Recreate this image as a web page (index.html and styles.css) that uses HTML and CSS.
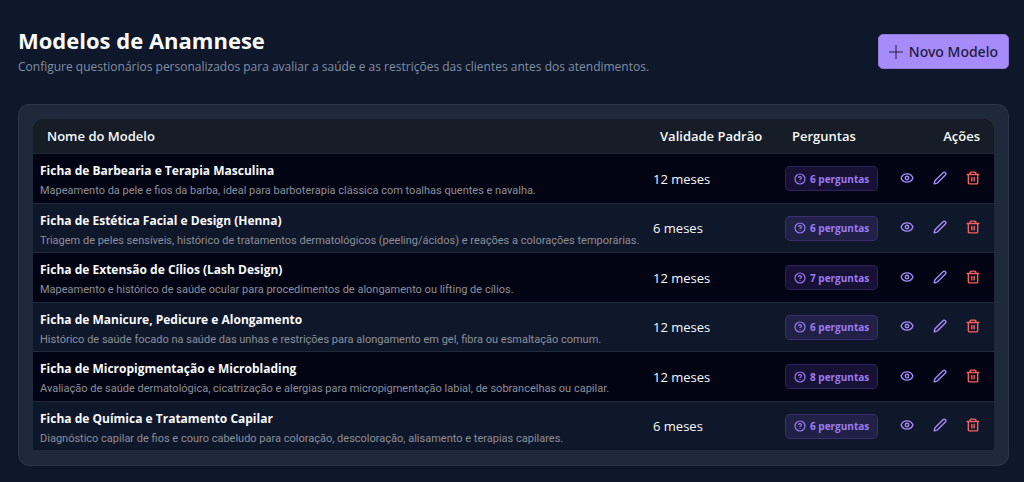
FILE: index.html
```html
<!DOCTYPE html>
<html lang="pt-br">
<head>
  <meta charset="UTF-8">
  <title>Modelos de Anamnese</title>
  <meta name="viewport" content="width=device-width, initial-scale=1">
  <link rel="stylesheet" href="styles.css">
</head>
<body>
  <!-- Ícones reutilizados nas linhas -->
  <svg class="sprite" aria-hidden="true">
    <symbol id="i-help" viewBox="0 0 24 24"><circle cx="12" cy="12" r="10"/><path d="M9.1 9a3 3 0 0 1 5.8 1c0 2-3 3-3 3M12 17h.01"/></symbol>
    <symbol id="i-eye" viewBox="0 0 24 24"><path d="M2 12.3a1 1 0 0 1 0-.7 10.8 10.8 0 0 1 20 0 1 1 0 0 1 0 .7 10.8 10.8 0 0 1-20 0"/><circle cx="12" cy="12" r="3"/></symbol>
    <symbol id="i-edit" viewBox="0 0 24 24"><path d="M21.2 6.8a1 1 0 0 0-4-4L3.8 16.2a2 2 0 0 0-.5.8L2 21.4a.5.5 0 0 0 .6.6L7 20.7a2 2 0 0 0 .8-.5z"/></symbol>
    <symbol id="i-trash" viewBox="0 0 24 24"><path d="M2 6h20M20 6v14a2 2 0 0 1-2 2H6a2 2 0 0 1-2-2V6M7 6V4a2 2 0 0 1 2-2h6a2 2 0 0 1 2 2v2M10 11v6M14 11v6"/></symbol>
  </svg>

  <header class="topo">
    <div>
      <h1>Modelos de Anamnese</h1>
      <p class="subtitulo">Configure questionários personalizados para avaliar a saúde e as restrições das clientes antes dos atendimentos.</p>
    </div>
    <button class="btn-novo" type="button">
      <svg viewBox="0 0 14 14" aria-hidden="true"><path d="M7 0v14M0 7h14"/></svg>
      Novo Modelo
    </button>
  </header>

  <main class="painel">
    <table class="tabela">
      <thead>
        <tr>
          <th>Nome do Modelo</th>
          <th class="col-validade">Validade Padrão</th>
          <th class="col-perguntas">Perguntas</th>
          <th class="col-acoes">Ações</th>
        </tr>
      </thead>
      <tbody id="modelos"></tbody>
    </table>
  </main>

  <script>
    const modelos = [
      ["Ficha de Barbearia e Terapia Masculina", "Mapeamento da pele e fios da barba, ideal para barboterapia clássica com toalhas quentes e navalha.", 12, 6],
      ["Ficha de Estética Facial e Design (Henna)", "Triagem de peles sensíveis, histórico de tratamentos dermatológicos (peeling/ácidos) e reações a colorações temporárias.", 6, 6],
      ["Ficha de Extensão de Cílios (Lash Design)", "Mapeamento e histórico de saúde ocular para procedimentos de alongamento ou lifting de cílios.", 12, 7],
      ["Ficha de Manicure, Pedicure e Alongamento", "Histórico de saúde focado na saúde das unhas e restrições para alongamento em gel, fibra ou esmaltação comum.", 12, 6],
      ["Ficha de Micropigmentação e Microblading", "Avaliação de saúde dermatológica, cicatrização e alergias para micropigmentação labial, de sobrancelhas ou capilar.", 12, 8],
      ["Ficha de Química e Tratamento Capilar", "Diagnóstico capilar de fios e couro cabeludo para coloração, descoloração, alisamento e terapias capilares.", 6, 6]
    ];

    const icone = nome => `<svg class="icone" aria-hidden="true"><use href="#i-${nome}"/></svg>`;

    document.getElementById('modelos').innerHTML = modelos.map(([nome, descricao, meses, perguntas]) => `
      <tr>
        <td><div class="nome">${nome}</div><div class="descricao">${descricao}</div></td>
        <td>${meses} meses</td>
        <td><span class="badge">${icone('help')}${perguntas} perguntas</span></td>
        <td>
          <div class="acoes">
            <button type="button" aria-label="Visualizar">${icone('eye')}</button>
            <button type="button" aria-label="Editar">${icone('edit')}</button>
            <button type="button" class="excluir" aria-label="Excluir">${icone('trash')}</button>
          </div>
        </td>
      </tr>`).join('');
  </script>
</body>
</html>
```
FILE: styles.css
```css
* {
  box-sizing: border-box;
}
body {
  margin: 0;
  padding: 25px 15px 16px 18px;
  background: #0f172a;
  color: #f8fafc;
  font-family: 'Segoe UI', 'Open Sans', 'Noto Sans', sans-serif;
  font-size: 13px;
}
button {
  font-family: inherit;
  cursor: pointer;
}
.sprite {
  display: none;
}
.topo {
  display: flex;
  justify-content: space-between;
  align-items: center;
  margin-bottom: 26px;
}
h1 {
  margin: 0;
  font-size: 22px;
  line-height: 31px;
  font-weight: 700;
}
.subtitulo {
  margin: 0;
  font-size: 12px;
  line-height: 22px;
  color: #8190a6;
}
.btn-novo {
  display: flex;
  align-items: center;
  gap: 6px;
  height: 35px;
  padding: 0 10px;
  background: #a78bfa;
  color: #1e1b3a;
  border: 1px solid #8f79d8;
  border-radius: 5px;
  font-family: 'Segoe UI', 'Noto Sans', sans-serif;
  font-size: 14px;
  font-weight: 500;
}
.btn-novo svg {
  width: 14px;
  height: 14px;
  fill: none;
  stroke: currentColor;
}
.painel {
  padding: 14px;
  background: #1e293b;
  border: 1px solid #293548;
  border-radius: 11px;
}
.tabela {
  width: 100%;
  border-spacing: 0;
  table-layout: fixed;
}
.tabela th {
  height: 35px;
  padding: 0 14px;
  background: #161d26;
  border-bottom: 1px solid #1e2937;
  font-size: 13px;
  font-weight: 600;
  text-align: left;
}
.tabela th:first-child {
  border-top-left-radius: 11px;
}
.tabela th:last-child {
  border-top-right-radius: 11px;
}
.tabela .col-validade {
  width: 132px;
}
.tabela .col-perguntas {
  width: 108px;
}
.tabela .col-acoes {
  width: 108px;
  text-align: right;
}
.tabela td {
  height: 50px;
  padding: 0 7px;
  background: #020413;
  border-bottom: 1px solid #1e293b;
  white-space: nowrap;
}
.tabela tr:nth-child(even) td {
  height: 49px;
  background: #0f172a;
}
.nome {
  padding-top: 4px;
  font-size: 12px;
  line-height: 20px;
  font-weight: 700;
}
.descricao {
  font-family: 'Segoe UI', Roboto, sans-serif;
  font-size: 11px;
  line-height: 19px;
  color: #8c8f99;
}
.icone {
  width: 14px;
  height: 14px;
  fill: none;
  stroke: currentColor;
  stroke-width: 2.4;
  stroke-linecap: round;
  stroke-linejoin: round;
}
.badge {
  display: inline-flex;
  align-items: center;
  gap: 4px;
  height: 25px;
  padding: 0 8px;
  background: rgba(139, 92, 246, 0.15);
  border: 1px solid rgba(139, 92, 246, 0.22);
  border-radius: 5px;
  color: #9b7cf0;
  font-size: 10px;
  font-weight: 700;
  vertical-align: middle;
}
.badge .icone {
  width: 12px;
  height: 12px;
}
.acoes {
  display: flex;
  justify-content: flex-end;
  gap: 5px;
  padding-bottom: 2px;
}
.acoes button {
  display: flex;
  align-items: center;
  justify-content: center;
  width: 28px;
  height: 28px;
  padding: 0;
  background: none;
  border: 0;
  border-radius: 5px;
  color: #a78bfa;
}
.acoes .excluir {
  color: #f8605f;
}
```
